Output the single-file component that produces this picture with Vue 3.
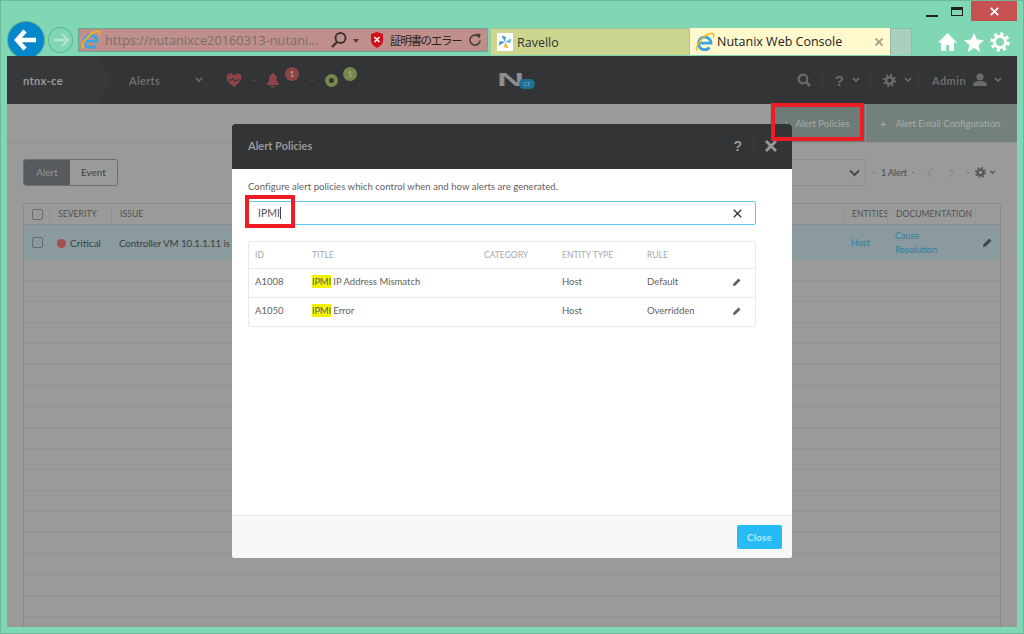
<script setup>
const headers = ['ID', 'TITLE', 'CATEGORY', 'ENTITY TYPE', 'RULE']

const policies = [
  { id: 'A1008', title: 'IP Address Mismatch', type: 'Host', rule: 'Default' },
  { id: 'A1050', title: 'Error', type: 'Host', rule: 'Overridden' }
]

const emptyRows = Array.from({ length: 18 })
</script>

<template>
  <div class="window">
    <div class="caption">
      <span class="cap-btn min"><i></i></span>
      <span class="cap-btn max"><i></i></span>
      <span class="cap-btn close">
        <svg width="11" height="11" viewBox="0 0 12 12"><path d="M2 2l8 8M10 2l-8 8" stroke="#fff" stroke-width="2" /></svg>
      </span>
    </div>

    <div class="toolbar">
      <div class="nav-back">
        <svg width="24" height="22" viewBox="0 0 24 22"><path d="M11 2L3 11l8 9M3 11h19" fill="none" stroke="#fff" stroke-width="4.4" /></svg>
      </div>
      <div class="nav-forward">
        <svg width="16" height="14" viewBox="0 0 16 14"><path d="M9 1l6 6-6 6M15 7H1" fill="none" stroke="#b7e4cf" stroke-width="2.4" /></svg>
      </div>
      <div class="address">
        <svg class="ie" width="20" height="20" viewBox="0 0 20 20">
          <path d="M3.500 11.200h12.500A6.300 6.300 0 1 0 14.500 15.500" fill="none" stroke="#3aa6e0" stroke-width="2.800" />
          <path d="M2.500 18.500C-1 15 8 3.500 15 1.500c3.500-.8 4.500 1.500 3 4" fill="none" stroke="#f2b91e" stroke-width="1.500" />
        </svg>
        <span class="url">https://nutanixce20160313-nutani...</span>
        <svg class="addr-search" width="18" height="18" viewBox="0 0 18 18"><circle cx="10.500" cy="7" r="5" fill="none" stroke="#3d3230" stroke-width="2" /><path d="M7 11l-5 5" stroke="#3d3230" stroke-width="2.400" /></svg>
        <span class="caret-down"></span>
        <svg class="shield" width="14" height="16" viewBox="0 0 14 16"><path d="M7 0l6 2v7c0 3-3 5-6 7-3-2-6-4-6-7V2z" fill="#d0111b" /><path d="M4.500 5l5 5M9.500 5l-5 5" stroke="#fff" stroke-width="1.600" /></svg>
        <span class="cert">証明書のエラー</span>
        <svg class="reload" width="14" height="16" viewBox="0 0 15 16"><path d="M11.500 4.500a5.400 5.400 0 1 0 1.400 4" fill="none" stroke="#4b3f3d" stroke-width="1.800" /><path d="M8.500 1l5 .5-1 5z" fill="#4b3f3d" /></svg>
      </div>
      <div class="tab tab-ravello">
        <span class="rav-icon">
          <svg width="16" height="16" viewBox="0 0 18 18">
            <path d="M9 9L5 2l5 1z" fill="#3c9ad6" />
            <path d="M9 9l7-4-1 5z" fill="#5fb5d8" />
            <path d="M9 9l4 7-5-1z" fill="#f0b429" />
            <path d="M9 9l-7 4 1-5z" fill="#3c9ad6" />
          </svg>
        </span>
        <span>Ravello</span>
      </div>
      <div class="tab tab-active">
        <svg class="ie" width="20" height="20" viewBox="0 0 20 20">
          <path d="M3.500 11.200h12.500A6.300 6.300 0 1 0 14.500 15.500" fill="none" stroke="#3aa6e0" stroke-width="2.800" />
          <path d="M2.500 18.500C-1 15 8 3.500 15 1.500c3.500-.8 4.500 1.500 3 4" fill="none" stroke="#f2b91e" stroke-width="1.500" />
        </svg>
        <span class="tab-title">Nutanix Web Console</span>
        <svg width="10" height="10" viewBox="0 0 10 10"><path d="M1.500 1.500l7 7M8.500 1.500l-7 7" stroke="#a8a690" stroke-width="1.800" /></svg>
      </div>
      <div class="tab-new"></div>
      <div class="tools">
        <svg width="21" height="20" viewBox="0 0 21 20"><path d="M10.500 1L1 10.500h3V19h5v-6h3v6h5v-8.500h3z" fill="#fff" /></svg>
        <svg width="20" height="19" viewBox="0 0 20 19"><path d="M10 0l2.800 6.600 7.200.6-5.500 4.700 1.700 7L10 15l-6.200 3.900 1.700-7L0 7.200l7.200-.6z" fill="#fff" /></svg>
        <svg width="20" height="20" viewBox="0 0 20 20"><circle cx="10" cy="10" r="5.500" fill="none" stroke="#fff" stroke-width="3" /><circle cx="10" cy="10" r="8" fill="none" stroke="#fff" stroke-width="3.400" stroke-dasharray="3.200 3.080" /></svg>
      </div>
    </div>

    <div class="page">
      <header class="topbar">
        <div class="cluster">ntnx-ce</div>
        <div class="section">Alerts</div>
        <svg class="chev" width="8" height="6" viewBox="0 0 8 6"><path d="M1 1l3 3 3-3" fill="none" stroke="#6b6c6e" stroke-width="1.600" /></svg>
        <div class="status">
          <svg width="16" height="14" viewBox="0 0 16 14"><path d="M8 14C3 10 .5 7.500.5 4.500A4 4 0 0 1 8 2.500a4 4 0 0 1 7.500 2C15.500 7.500 13 10 8 14z" fill="#8c4446" /><path d="M2 7h4l1-2 2 4 1-2h4" fill="none" stroke="#333436" stroke-width=".9" /></svg>
          <i class="dot first"></i>
          <span class="bell">
            <svg width="14" height="15" viewBox="0 0 14 15"><path d="M7 0a1.500 1.500 0 0 1 1.500 1.500C11 2.500 11 5 11 8l2 3v1H1v-1l2-3c0-3 0-5.500 2.500-6.500A1.500 1.500 0 0 1 7 0zM5 13h4a2 1.500 0 0 1-4 0z" fill="#8c4446" /></svg>
            <b class="badge red">1</b>
          </span>
          <i class="dot second"></i>
          <span class="bell">
            <span class="ring"></span>
            <b class="badge green">1</b>
          </span>
        </div>
        <div class="logo">
          <span class="logo-n">N</span>
          <span class="logo-ce">CE</span>
        </div>
        <div class="right-menu">
          <span class="menu-item search-item">
            <svg width="14" height="14" viewBox="0 0 14 14"><circle cx="6" cy="6" r="4.300" fill="none" stroke="#6a6b6d" stroke-width="2.200" /><path d="M9 9l4 4" stroke="#6a6b6d" stroke-width="2.600" /></svg>
          </span>
          <span class="menu-item help-item">
            <span class="qmark">?</span>
            <svg width="8" height="6" viewBox="0 0 8 6"><path d="M1 1l3 3 3-3" fill="none" stroke="#6b6c6e" stroke-width="1.600" /></svg>
          </span>
          <span class="menu-item gear-item">
            <svg width="13" height="13" viewBox="0 0 14 14"><circle cx="7" cy="7" r="3.600" fill="none" stroke="#6a6b6d" stroke-width="2.600" /><circle cx="7" cy="7" r="5.800" fill="none" stroke="#6a6b6d" stroke-width="2.400" stroke-dasharray="2.300 2.250" /></svg>
            <svg width="8" height="6" viewBox="0 0 8 6"><path d="M1 1l3 3 3-3" fill="none" stroke="#6b6c6e" stroke-width="1.600" /></svg>
          </span>
          <span class="menu-item admin">
            <span>Admin</span>
            <svg width="14" height="14" viewBox="0 0 14 14"><circle cx="7" cy="4" r="3.500" fill="#6a6b6d" /><path d="M0 13c0-4 3-5 7-5s7 1 7 5z" fill="#6a6b6d" /></svg>
            <svg width="8" height="6" viewBox="0 0 8 6"><path d="M1 1l3 3 3-3" fill="none" stroke="#6b6c6e" stroke-width="1.600" /></svg>
          </span>
        </div>
      </header>

      <div class="subbar">
        <div class="sub-tab">
          <span class="plus">+</span>
          <span>Alert Policies</span>
        </div>
        <div class="sub-tab wide">
          <span class="plus">+</span>
          <span>Alert Email Configuration</span>
        </div>
      </div>

      <div class="content">
        <div class="filter-row">
          <div class="toggle">
            <span class="toggle-on">Alert</span>
            <span class="toggle-off">Event</span>
          </div>
          <div class="pager">
            <div class="select">
              <svg width="11" height="8" viewBox="0 0 11 8"><path d="M1 1.500l4.500 4.500L10 1.500" fill="none" stroke="#4a4b4c" stroke-width="2" /></svg>
            </div>
            <i class="dot light d1"></i>
            <span class="count">1 Alert</span>
            <i class="dot light d2"></i>
            <span class="arrow prev">
              <svg width="6" height="10" viewBox="0 0 6 10"><path d="M5 1L1 5l4 4" fill="none" stroke="#8a8b8a" stroke-width="1.600" /></svg>
            </span>
            <span class="arrow next">
              <svg width="6" height="10" viewBox="0 0 6 10"><path d="M1 1l4 4-4 4" fill="none" stroke="#8a8b8a" stroke-width="1.600" /></svg>
            </span>
            <i class="dot light d3"></i>
            <svg class="pager-gear" width="11" height="11" viewBox="0 0 14 14"><circle cx="7" cy="7" r="3.600" fill="none" stroke="#555" stroke-width="2.600" /><circle cx="7" cy="7" r="5.800" fill="none" stroke="#555" stroke-width="2.400" stroke-dasharray="2.300 2.250" /></svg>
            <svg class="pager-chev" width="7" height="5" viewBox="0 0 8 6"><path d="M1 1l3 3 3-3" fill="none" stroke="#555" stroke-width="1.600" /></svg>
          </div>
        </div>

        <div class="grid">
          <div class="grid-head">
            <span class="c-check"><i class="box"></i></span>
            <span class="c-sev">SEVERITY</span>
            <span class="c-issue">ISSUE</span>
            <span class="c-ent">ENTITIES</span>
            <span class="c-doc">DOCUMENTATION</span>
            <span class="c-edit"></span>
          </div>
          <div class="grid-row">
            <span class="c-check"><i class="box"></i></span>
            <span class="c-sev"><i class="sev-dot"></i>Critical</span>
            <span class="c-issue">Controller VM 10.1.1.11 is unreachable</span>
            <span class="c-ent link">Host</span>
            <span class="c-doc link">Cause<br />Resolution</span>
            <span class="c-edit">
              <svg width="9" height="9" viewBox="0 0 10 10"><path d="M0 10l.6-3L7 .6 9.400 3 3 9.400z" fill="#444" /></svg>
            </span>
          </div>
          <div v-for="(row, i) in emptyRows" :key="i" class="grid-empty"></div>
        </div>
      </div>
    </div>

    <div class="modal">
      <div class="modal-head">
        <span class="modal-title">Alert Policies</span>
        <span class="modal-help">?</span>
        <span class="modal-sep"></span>
        <svg width="12" height="12" viewBox="0 0 12 12"><path d="M1 1l10 10M11 1L1 11" stroke="#97989a" stroke-width="2.800" /></svg>
      </div>
      <div class="modal-body">
        <p class="intro">Configure alert policies which control when and how alerts are generated.</p>
        <div class="search">
          <span class="search-text">IPMI</span>
          <span class="cursor"></span>
          <svg class="search-clear" width="9" height="9" viewBox="0 0 9 9"><path d="M.8.8l7.400 7.400M8.200.8L.8 8.200" stroke="#3a3b3d" stroke-width="1.500" /></svg>
        </div>
        <div class="policies">
          <div class="pol-row pol-head">
            <span v-for="h in headers" :key="h">{{ h }}</span>
            <span></span>
          </div>
          <div v-for="p in policies" :key="p.id" class="pol-row">
            <span>{{ p.id }}</span>
            <span><mark>IPMI</mark> {{ p.title }}</span>
            <span></span>
            <span>{{ p.type }}</span>
            <span>{{ p.rule }}</span>
            <span class="pol-edit">
              <svg width="8" height="8" viewBox="0 0 10 10"><path d="M0 10l.6-3L7 .6 9.400 3 3 9.400z" fill="#5d5f62" /></svg>
            </span>
          </div>
        </div>
      </div>
      <div class="modal-foot">
        <button class="btn-close">Close</button>
      </div>
    </div>

    <div class="mark-box mark-policies"></div>
    <div class="mark-box mark-input"></div>
  </div>
</template>

<style scoped>
.window {
  position: relative;
  width: 1024px;
  height: 634px;
  box-sizing: border-box;
  overflow: hidden;
  display: flex;
  flex-direction: column;
  background: #80d7b3;
  border: 1px solid #6fb99a;
  font-family: Lato, "Open Sans", "Liberation Sans", sans-serif;
  color: #555;
}

.window svg { flex-shrink: 0; }

.caption {
  height: 20px;
  display: flex;
  justify-content: flex-end;
  padding-right: 6px;
}

.cap-btn {
  width: 46px;
  height: 20px;
  display: flex;
  align-items: center;
  justify-content: center;
}

.cap-btn.min { width: 30px; }
.cap-btn.min i { width: 12px; height: 2px; background: #222; margin-top: 9px; }
.cap-btn.max { width: 20px; margin-right: 4px; }
.cap-btn.max i { width: 10px; height: 5px; border: 1px solid #222; border-top-width: 3px; }
.cap-btn.close { background: #c75050; }

.toolbar {
  height: 35px;
  display: flex;
  align-items: flex-start;
  flex-shrink: 0;
  padding-left: 7px;
}

.nav-back {
  width: 36px;
  height: 36px;
  margin-top: 1px;
  border-radius: 50%;
  background: #0686cb;
  box-shadow: 0 0 0 1px #5da997;
  display: flex;
  align-items: center;
  justify-content: center;
  flex-shrink: 0;
}

.nav-forward {
  width: 23px;
  height: 24px;
  margin: 6px 5px 0 4px;
  border: 1px solid #63b597;
  border-radius: 50%;
  display: flex;
  align-items: center;
  justify-content: center;
  flex-shrink: 0;
}

.address {
  width: 410px;
  height: 24px;
  margin-top: 7px;
  box-sizing: border-box;
  flex-shrink: 0;
  display: flex;
  align-items: center;
  background: #bf8f8b;
  border: 1px solid #67a78e;
  padding-left: 2px;
}

.url {
  margin-left: 4px;
  width: 215px;
  flex-shrink: 0;
  font: 12.800px "Open Sans", sans-serif;
  color: #786e6b;
  white-space: nowrap;
}

.addr-search { margin-left: 10px; }

.caret-down {
  margin-left: 5px;
  border: 3.500px solid transparent;
  border-top: 4px solid #4b3f3d;
  margin-top: 4px;
}

.shield { margin-left: 11px; }

.cert {
  margin-left: 6px;
  width: 71px;
  flex-shrink: 0;
  font: 11.500px "Noto Sans CJK JP", sans-serif;
  letter-spacing: -1.300px;
  color: #2d2523;
  white-space: nowrap;
}

.reload { margin-left: 7px; }

.tab {
  height: 27px;
  margin-top: 7px;
  box-sizing: border-box;
  display: flex;
  align-items: center;
  flex-shrink: 0;
  font: 12.500px "Open Sans", sans-serif;
  color: #333;
}

.tab-ravello {
  width: 200px;
  margin-left: 2px;
  background: #ccd68f;
  border: 1px solid #9fc99d;
  border-bottom: 0;
  padding-left: 6px;
  gap: 4px;
}

.rav-icon {
  width: 16px;
  height: 18px;
  background: #fff;
  display: flex;
  align-items: center;
  justify-content: center;
}

.tab-active {
  width: 200px;
  background: #fff9cd;
  padding: 0 6px 0 5px;
  color: #222;
}

.tab-title { margin-left: 2px; flex: 1; white-space: nowrap; }

.tab-new {
  width: 22px;
  height: 27px;
  margin-top: 7px;
  box-sizing: border-box;
  background: #abcfbd;
  border: 1px solid #8fbda6;
  border-bottom: 0;
}

.tools {
  margin: 11px 0 0 25px;
  display: flex;
  gap: 6px;
  align-items: center;
}

.page {
  flex: 1;
  min-height: 0;
  margin: 0 6px 6px;
  display: flex;
  flex-direction: column;
  background: #999a99;
  overflow: hidden;
}

.topbar {
  height: 48px;
  flex-shrink: 0;
  display: flex;
  align-items: center;
  background: #333436;
  color: #6c6d6f;
  font-size: 11px;
  font-weight: 700;
}

.cluster {
  width: 122px;
  height: 100%;
  flex-shrink: 0;
  box-sizing: border-box;
  display: flex;
  align-items: center;
  padding-left: 16px;
  color: #98999b;
  letter-spacing: .4px;
  background: #37383a;
  clip-path: polygon(0 0, 91px 0, 106px 50%, 91px 100%, 0 100%);
}

.section { width: 66px; letter-spacing: .3px; }
.chev { margin-right: 23px; }

.status {
  display: flex;
  align-items: center;
}

.dot {
  width: 2px;
  height: 1px;
  background: #555;
  display: inline-block;
  flex-shrink: 0;
}

.dot.first { margin: 0 11px 0 11px; }
.dot.second { margin: 0 12px 0 31px; }

.bell {
  position: relative;
  display: flex;
}

.ring {
  width: 5px;
  height: 5px;
  border: 4px solid #77884f;
  border-radius: 50%;
}

.badge {
  position: absolute;
  left: 19px;
  top: -6px;
  width: 14px;
  height: 14px;
  border-radius: 50%;
  font-size: 7px;
  line-height: 14px;
  text-align: center;
  color: #b9b9b9;
  font-weight: 400;
}

.badge.red { background: #8c4446; }
.badge.green { left: 18px; top: -7px; background: #77884f; }

.logo {
  position: absolute;
  left: 496px;
  top: 72px;
  height: 16px;
  display: flex;
  align-items: flex-end;
}

.logo-n {
  display: inline-block;
  width: 25px;
  align-self: flex-start;
  font: 900 18px/14px "Liberation Sans", sans-serif;
  color: #8c8d8e;
  transform: scaleX(2.100);
  transform-origin: left;
}

.logo-ce {
  width: 16px;
  height: 10px;
  margin-left: -3px;
  border-radius: 5px;
  background: #1f6f92;
  font-size: 6px;
  line-height: 10px;
  text-align: center;
  color: #5aa3c2;
  position: relative;
}

.right-menu {
  margin-left: auto;
  display: flex;
  align-items: center;
  height: 100%;
}

.menu-item {
  display: flex;
  align-items: center;
  gap: 8px;
  height: 16px;
  border-left: 1px solid #3d3e40;
}

.search-item { padding-right: 11px; border-left: 0; }
.help-item { padding: 0 10px 0 12px; }
.gear-item { padding: 0 6px 0 12px; }
.menu-item.admin { letter-spacing: .4px; padding: 0 15px 0 13px; gap: 7px; }

.qmark {
  font: 700 15px "Liberation Sans", sans-serif;
  color: #6a6b6d;
}

.subbar {
  height: 39px;
  box-sizing: border-box;
  flex-shrink: 0;
  display: flex;
  justify-content: flex-end;
  font-size: 9.500px;
  color: #a8aca9;
  border-bottom: 1px solid #8f908f;
  background: #9a9b9a;
}

.sub-tab {
  width: 95px;
  box-sizing: border-box;
  display: flex;
  align-items: center;
  padding-left: 12px;
  gap: 6px;
  background: #6f7b77;
  border-left: 1px solid #8d8e8d;
}

.sub-tab.wide { width: 152px; padding-left: 14px; gap: 9px; background: #74807b; }
.plus { font-size: 11px; }

.content {
  flex: 1;
  min-height: 0;
  display: flex;
  flex-direction: column;
  padding: 0 16px;
}

.filter-row {
  height: 60px;
  box-sizing: border-box;
  padding-top: 16px;
  display: flex;
  align-items: flex-start;
  justify-content: space-between;
  flex-shrink: 0;
}

.toggle {
  display: flex;
  width: 95px;
  height: 27px;
  box-sizing: border-box;
  border: 1px solid #6d6e6d;
  border-radius: 3px;
  overflow: hidden;
  font-size: 10px;
  line-height: 25px;
  text-align: center;
}

.toggle-on { width: 46px; background: #565b5f; color: #94979a; }
.toggle-off { flex: 1; background: #9a9b9a; color: #3f4041; }

.pager {
  display: flex;
  align-items: center;
  height: 27px;
  font-size: 9px;
  color: #4a4b4b;
  padding-right: 5px;
}

.select {
  width: 80px;
  height: 27px;
  box-sizing: border-box;
  border: 1px solid #8d8e8d;
  border-radius: 2px;
  display: flex;
  align-items: center;
  justify-content: flex-end;
  padding-right: 5px;
}

.dot.light { background: #6a6b6a; }
.dot.d1 { margin-left: 7px; }
.dot.d2 { margin-left: 5px; }
.dot.d3 { margin-left: 7px; }

.count { width: 26px; margin-left: 6px; white-space: nowrap; letter-spacing: -.1px; }

.arrow {
  width: 19px;
  display: flex;
  justify-content: center;
}

.arrow.prev { margin-left: 6px; }
.arrow.next { margin-left: 2px; }
.pager-gear { margin-left: 6px; }
.pager-chev { margin-left: 3px; }

.grid {
  flex: 1;
  min-height: 0;
  overflow: hidden;
  border: 1px solid #8a8b8a;
  border-bottom: 0;
  border-radius: 2px 2px 0 0;
}

.grid-head,
.grid-row {
  display: grid;
  grid-template-columns: 25px 62px 1fr 44px 88px 25px;
  align-items: center;
}

.grid-head {
  height: 21px;
  box-sizing: border-box;
  font-size: 8.500px;
  color: #505151;
  border-bottom: 1px solid #8a8b8a;
  letter-spacing: .1px;
}

.grid-head > span {
  height: 100%;
  display: flex;
  align-items: center;
  padding-left: 8px;
  box-sizing: border-box;
  border-left: 1px solid #909190;
}

.grid-head > span:first-child { border-left: 0; }

.c-issue { white-space: nowrap; }

.grid-row {
  height: 35px;
  background: #8a9a9f;
  font-size: 10px;
  color: #3c3e3f;
}

.grid-row > span { padding-left: 8px; box-sizing: border-box; }
.grid-row > .c-issue { font-size: 9.800px; letter-spacing: -.1px; }

.box {
  display: block;
  width: 9px;
  height: 9px;
  border: 1px solid #6a6b6b;
  border-radius: 2px;
}

.sev-dot {
  display: inline-block;
  width: 9px;
  height: 9px;
  border-radius: 50%;
  background: #a64f50;
  margin-right: 4px;
  vertical-align: -1px;
}

.link { color: #2f7f9f; font-size: 9px; line-height: 14px; }

.grid-empty {
  height: 21px;
  box-sizing: border-box;
  border-bottom: 1px solid #929392;
}

.modal {
  position: absolute;
  left: 231px;
  top: 123px;
  width: 560px;
  height: 434px;
  display: flex;
  flex-direction: column;
  border-radius: 3px;
  overflow: hidden;
  background: #fff;
}

.modal-head {
  height: 45px;
  flex-shrink: 0;
  box-sizing: border-box;
  display: flex;
  align-items: center;
  padding: 0 15px 2px 16px;
  background: #333436;
}

.modal-title {
  flex: 1;
  font-size: 11px;
  font-weight: 700;
  color: #98999b;
}

.modal-help {
  font: 700 14px "Liberation Sans", sans-serif;
  color: #97989a;
}

.modal-sep {
  width: 1px;
  height: 16px;
  background: #3d3e40;
  margin: 0 11px;
}

.modal-body {
  flex: 1;
  padding: 0 36px 0 16px;
}

.intro {
  margin: 12px 0 0;
  font-size: 9.500px;
  line-height: 12px;
  color: #5f6062;
  letter-spacing: .06px;
}

.search {
  height: 24px;
  margin-top: 8px;
  box-sizing: border-box;
  display: flex;
  align-items: center;
  padding: 0 13px 0 9px;
  border: 1px solid #5fc8f2;
  border-radius: 2px;
}

.search-text { font-size: 10.500px; color: #555; }
.cursor { width: 1px; height: 12px; background: #444; }
.search-clear { margin-left: auto; }

.policies {
  margin-top: 16px;
  border: 1px solid #e8e9ea;
  border-radius: 2px;
}

.pol-row {
  height: 29px;
  box-sizing: border-box;
  display: grid;
  grid-template-columns: 57px 172px 78px 85px 84px 1fr;
  align-items: center;
  padding: 0 0 3px 6px;
  font-size: 9.500px;
  color: #5f6062;
  border-top: 1px solid #e8e9ea;
}

.pol-row.pol-head {
  height: 26px;
  padding-bottom: 0;
  border-top: 0;
  font-size: 8.500px;
  color: #a2a9af;
}

mark {
  background: #f2f200;
  color: #5f6062;
  padding: 1px 0;
  letter-spacing: -.25px;
}

.pol-edit {
  display: flex;
  justify-content: center;
  padding-right: 13px;
}

.modal-foot {
  height: 43px;
  flex-shrink: 0;
  box-sizing: border-box;
  display: flex;
  justify-content: flex-end;
  align-items: center;
  padding-right: 10px;
  background: #f8f8f8;
  border-top: 1px solid #e9e9e9;
}

.btn-close {
  width: 45px;
  height: 24px;
  border: 0;
  border-radius: 2px;
  background: #26bbf4;
  color: #b9e9fb;
  font-family: inherit;
  font-size: 9.500px;
  font-weight: 700;
  letter-spacing: .3px;
}

.mark-box {
  position: absolute;
  box-sizing: border-box;
  border: 4px solid #ee1c25;
  pointer-events: none;
}

.mark-policies { left: 770px; top: 102px; width: 93px; height: 38px; }
.mark-input { left: 244px; top: 194px; width: 50px; height: 33px; }
</style>
